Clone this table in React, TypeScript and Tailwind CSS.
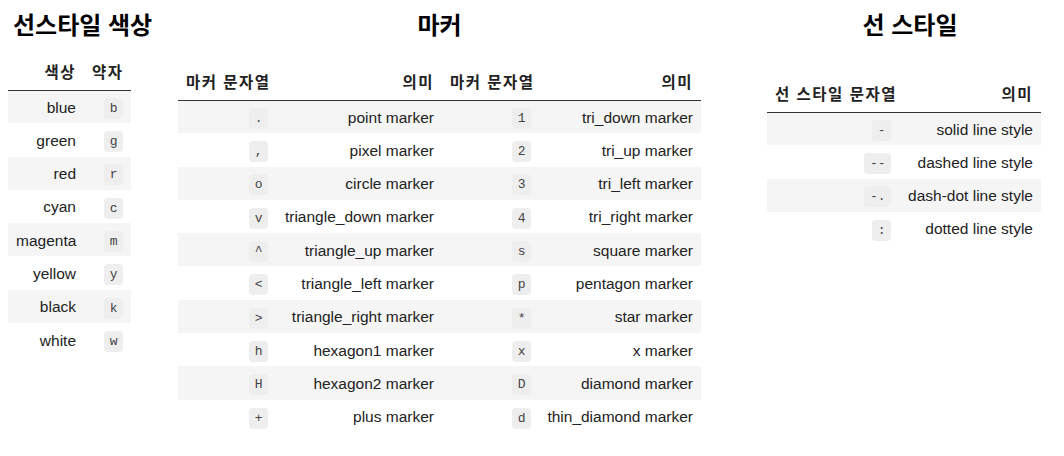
import React from "react";

const colors: [string, string][] = [
  ["blue", "b"],
  ["green", "g"],
  ["red", "r"],
  ["cyan", "c"],
  ["magenta", "m"],
  ["yellow", "y"],
  ["black", "k"],
  ["white", "w"],
];

const markers: [string, string, string, string][] = [
  [".", "point marker", "1", "tri_down marker"],
  [",", "pixel marker", "2", "tri_up marker"],
  ["o", "circle marker", "3", "tri_left marker"],
  ["v", "triangle_down marker", "4", "tri_right marker"],
  ["^", "triangle_up marker", "s", "square marker"],
  ["<", "triangle_left marker", "p", "pentagon marker"],
  [">", "triangle_right marker", "*", "star marker"],
  ["h", "hexagon1 marker", "x", "x marker"],
  ["H", "hexagon2 marker", "D", "diamond marker"],
  ["+", "plus marker", "d", "thin_diamond marker"],
];

const lines: [string, string][] = [
  ["-", "solid line style"],
  ["--", "dashed line style"],
  ["-.", "dash-dot line style"],
  [":", "dotted line style"],
];

function Code({ children }: { children: string }) {
  return (
    <code className="inline-block rounded-sm bg-[#eeeeee] px-[5.5px] align-middle font-['Liberation_Mono',monospace] text-[13px] leading-[21px] whitespace-pre text-[#444]">
      {children}
    </code>
  );
}

function Title({ children }: { children: string }) {
  return (
    <h2 className="h-[36px] text-[24px] leading-[36px] font-bold text-black">
      {children}
    </h2>
  );
}

const th =
  "h-[34px] px-2 text-right align-middle font-bold tracking-[1.5px] text-[#222] border-b border-[#333] whitespace-nowrap";
const td = "h-[33.3px] px-2 pt-[1px] pb-0 text-right align-middle whitespace-nowrap";

export default function App() {
  return (
    <div className="flex h-[456px] w-[1064px] items-start bg-white pt-2 font-['Liberation_Sans','Noto_Sans_CJK_KR',sans-serif] text-[15.5px] text-[#222]">
      {/* 색상 */}
      <div className="ml-2 flex w-[170px] flex-col">
        <div className="pl-[5px]">
          <Title>선스타일 색상</Title>
        </div>
        <table className="mt-[12px] w-[123px] table-fixed border-collapse">
          <thead>
            <tr>
              <th className={`${th} w-[76px]`}>색상</th>
              <th className={`${th} w-[47px]`}>약자</th>
            </tr>
          </thead>
          <tbody>
            {colors.map(([name, abbr], i) => (
              <tr key={name} className={i % 2 === 0 ? "bg-[#f5f5f5]" : ""}>
                <td className={td}>{name}</td>
                <td className={td}>
                  <Code>{abbr}</Code>
                </td>
              </tr>
            ))}
          </tbody>
        </table>
      </div>

      {/* 마커 */}
      <div className="flex w-[523px] flex-col">
        <div className="text-center">
          <Title>마커</Title>
        </div>
        <table className="mt-[22px] w-[523px] table-fixed border-collapse">
          <thead>
            <tr>
              <th className={`${th} w-[98px]`}>마커 문자열</th>
              <th className={`${th} w-[166px]`}>의미</th>
              <th className={`${th} w-[97px]`}>마커 문자열</th>
              <th className={`${th} w-[162px]`}>의미</th>
            </tr>
          </thead>
          <tbody>
            {markers.map(([a, am, b, bm], i) => (
              <tr key={a} className={i % 2 === 0 ? "bg-[#f5f5f5]" : ""}>
                <td className={td}>
                  <Code>{a}</Code>
                </td>
                <td className={td}>{am}</td>
                <td className={td}>
                  <Code>{b}</Code>
                </td>
                <td className={td}>{bm}</td>
              </tr>
            ))}
          </tbody>
        </table>
      </div>

      {/* 선 스타일 */}
      <div className="ml-[66px] flex w-[274px] flex-col">
        <div className="pl-[12px] text-center">
          <Title>선 스타일</Title>
        </div>
        <table className="mt-[34px] w-[274px] table-fixed border-collapse">
          <thead>
            <tr>
              <th className={`${th} w-[132px]`}>선 스타일 문자열</th>
              <th className={`${th} w-[142px]`}>의미</th>
            </tr>
          </thead>
          <tbody>
            {lines.map(([s, m], i) => (
              <tr key={s} className={i % 2 === 0 ? "bg-[#f5f5f5]" : ""}>
                <td className={td}>
                  <Code>{s}</Code>
                </td>
                <td className={td}>{m}</td>
              </tr>
            ))}
          </tbody>
        </table>
      </div>
    </div>
  );
}
